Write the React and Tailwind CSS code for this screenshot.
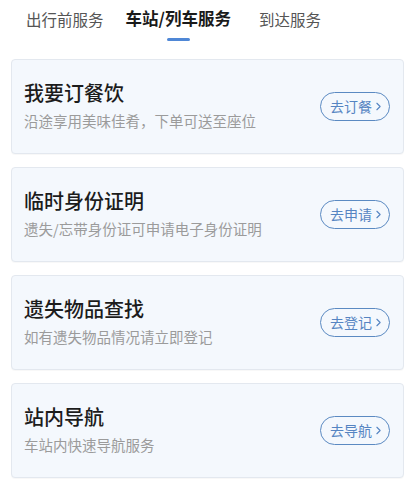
import { ChevronRight } from "lucide-react";

const services = [
  { title: "我要订餐饮", desc: "沿途享用美味佳肴，下单可送至座位", action: "去订餐" },
  { title: "临时身份证明", desc: "遗失/忘带身份证可申请电子身份证明", action: "去申请" },
  { title: "遗失物品查找", desc: "如有遗失物品情况请立即登记", action: "去登记" },
  { title: "站内导航", desc: "车站内快速导航服务", action: "去导航" },
];

const font = { fontFamily: "'Noto Sans CJK SC', 'Noto Sans', sans-serif" };

export default function App() {
  return (
    <div className="w-[415px] h-[479px] overflow-hidden bg-white" style={font}>
      {/* tabs */}
      <div className="flex items-start h-[59px] pl-[26px]">
        <div className="pt-[7px] text-[15.5px] leading-[24px] text-[#555]">出行前服务</div>
        <div className="ml-[22px] pt-[6px] flex flex-col items-center">
          <div className="text-[16.5px] leading-[25px] font-bold text-[#1a1a1a]">车站/列车服务</div>
          <div className="mt-[7px] w-[23px] h-[3px] rounded-sm bg-[#4f87d6]" />
        </div>
        <div className="ml-[28px] pt-[7px] text-[15.5px] leading-[24px] text-[#555]">到达服务</div>
      </div>

      {/* cards */}
      <div className="flex flex-col gap-[13px] px-[11px]">
        {services.map((s) => (
          <div
            key={s.title}
            className="h-[95px] flex items-center justify-between pl-[12px] pr-[14px] rounded-[4px] border border-[#e3e8ef] bg-[#f4f8fd] shadow-[0_1px_1px_rgba(0,0,0,0.03)]"
          >
            <div className="flex flex-col -mt-[4px]">
              <div className="text-[20px] leading-[28px] font-medium text-[#1c1c1c]">{s.title}</div>
              <div className="mt-[4px] text-[14.5px] leading-[20px] text-[#9b9b9b]">{s.desc}</div>
            </div>
            <button
              type="button"
              className="flex items-center h-[29px] pl-[9px] pr-[4px] -mr-[1px] rounded-full border border-[#5b8ac2] text-[14px] text-[#5584c2] bg-transparent"
            >
              {s.action}
              <ChevronRight className="w-[13px] h-[13px]" strokeWidth={2} />
            </button>
          </div>
        ))}
      </div>
    </div>
  );
}
